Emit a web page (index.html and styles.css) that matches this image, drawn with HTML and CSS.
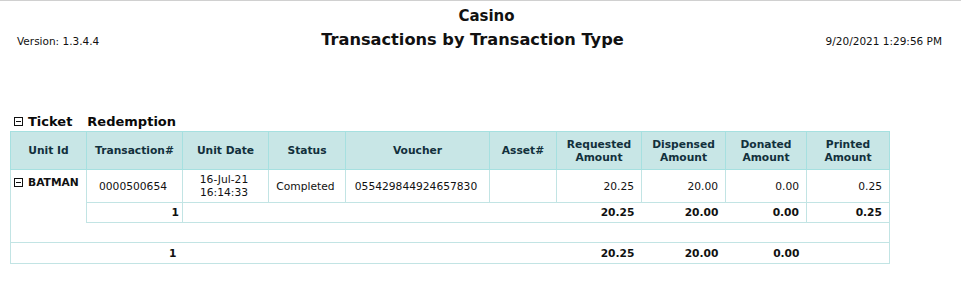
FILE: index.html
```html
<!DOCTYPE html>
<html>
<head>
<meta charset="utf-8">
<link rel="stylesheet" href="styles.css">
</head>
<body>
<div class="page">
  <header class="report-header">
    <div class="company">Casino</div>
    <div class="header-row">
      <div class="version">Version: 1.3.4.4</div>
      <div class="title">Transactions by Transaction Type</div>
      <div class="printed">9/20/2021 1:29:56 PM</div>
    </div>
  </header>

  <section class="group">
    <div class="group-title"><span class="toggle"></span><span class="group-name">Ticket</span><span class="group-name">Redemption</span></div>
    <table class="grid">
      <colgroup>
        <col class="c-unit"><col class="c-trans"><col class="c-date"><col class="c-status"><col class="c-voucher">
        <col class="c-asset"><col class="c-req"><col class="c-disp"><col class="c-don"><col class="c-prn">
      </colgroup>
      <thead>
        <tr>
          <th>Unit Id</th>
          <th>Transaction#</th>
          <th>Unit Date</th>
          <th>Status</th>
          <th>Voucher</th>
          <th>Asset#</th>
          <th>Requested<br>Amount</th>
          <th>Dispensed<br>Amount</th>
          <th>Donated<br>Amount</th>
          <th>Printed<br>Amount</th>
        </tr>
      </thead>
      <tbody>
        <tr class="data">
          <td class="unit" rowspan="2"><span class="toggle small"></span>BATMAN</td>
          <td class="ctr">0000500654</td>
          <td class="ctr">16-Jul-21<br>16:14:33</td>
          <td class="ctr">Completed</td>
          <td class="ctr">055429844924657830</td>
          <td></td>
          <td class="num">20.25</td>
          <td class="num">20.00</td>
          <td class="num">0.00</td>
          <td class="num">0.25</td>
        </tr>
        <tr class="subtotal">
          <td class="count">1</td>
          <td colspan="4" class="open"></td>
          <td class="num open">20.25</td>
          <td class="num open">20.00</td>
          <td class="num">0.00</td>
          <td class="num">0.25</td>
        </tr>
        <tr class="spacer">
          <td class="spacer-unit"></td>
          <td colspan="9" class="spacer-rest"></td>
        </tr>
        <tr class="total">
          <td colspan="2" class="count">1</td>
          <td colspan="4" class="open"></td>
          <td class="num open">20.25</td>
          <td class="num open">20.00</td>
          <td class="num open">0.00</td>
          <td class="open"></td>
        </tr>
      </tbody>
    </table>
  </section>
</div>
</body>
</html>
```

FILE: styles.css
```css
html, body {
  margin: 0;
  padding: 0;
  background: #ffffff;
}

body {
  font-family: "DejaVu Sans", Verdana, sans-serif;
  color: #111;
}

.page {
  border-top: 1px solid #d0d0d0;
  width: 961px;
  height: 291px;
}

.report-header {
  display: flex;
  flex-direction: column;
}

.company {
  text-align: center;
  font-weight: bold;
  font-size: 15px;
  padding-top: 6px;
  padding-left: 12px;
  height: 20px;
  line-height: 18px;
}

.header-row {
  display: grid;
  grid-template-columns: 1fr auto 1fr;
  align-items: center;
  height: 25px;
}

.version {
  font-size: 10.5px;
  padding-left: 17px;
  padding-top: 3px;
}

.title {
  font-weight: bold;
  font-size: 16.2px;
  text-align: center;
  margin-right: 16px;
}

.printed {
  font-size: 10.5px;
  text-align: right;
  padding-right: 19px;
  padding-top: 3px;
}

.group {
  padding: 0 0 0 10px;
  margin-top: 59px;
}

.group-title {
  display: flex;
  align-items: center;
  font-weight: bold;
  font-size: 13px;
  height: 20px;
  padding-left: 4px;
  padding-top: 1px;
  box-sizing: border-box;
  color: #0a0a0a;
}

.group-title .toggle {
  margin-right: 5px;
}

.group-name + .group-name {
  margin-left: 15px;
}

.toggle {
  display: inline-block;
  position: relative;
  width: 7px;
  height: 7px;
  border: 1px solid #111;
  flex: none;
}

.toggle::after {
  content: "";
  position: absolute;
  left: 1px;
  right: 1px;
  top: 3px;
  height: 1px;
  background: #111;
}

.toggle.small {
  margin-right: 5px;
  vertical-align: -1px;
}

.grid {
  border-collapse: collapse;
  table-layout: fixed;
  width: 879px;
  font-size: 10.7px;
}

.c-unit { width: 76px; }
.c-trans { width: 96px; }
.c-date { width: 86px; }
.c-status { width: 77px; }
.c-voucher { width: 144px; }
.c-asset { width: 67px; }
.c-req { width: 85px; }
.c-disp { width: 84px; }
.c-don { width: 81px; }
.c-prn { width: 83px; }

.grid th {
  background: #c8e6e6;
  border: 1px solid #a6e0e0;
  color: #12303c;
  font-weight: bold;
  height: 37px;
  padding: 0 2px;
  line-height: 13px;
  text-align: center;
}

.grid td {
  border: 1px solid #c2e4e4;
  padding: 0 7px 0 4px;
}

.data td {
  height: 32px;
  line-height: 13px;
}

.ctr { text-align: center; }
.num { text-align: right; }

.grid td.unit {
  vertical-align: top;
  font-weight: bold;
  padding: 6px 2px 0 3px;
  border-bottom: none;
  white-space: nowrap;
}

.subtotal td {
  height: 19px;
  font-weight: bold;
}

.grid td.count {
  text-align: right;
  padding-right: 3px;
}

.grid .subtotal td.open {
  border-right: none;
}

.grid .subtotal td.open + td {
  border-left: none;
}

.spacer td {
  height: 19px;
}

.grid td.spacer-unit {
  border-top: none;
  border-right: none;
}

.grid td.spacer-rest {
  border-left: none;
}

.total td {
  height: 20px;
  font-weight: bold;
  border-left: none;
  border-right: none;
}

.grid .total td.count {
  border-left: 1px solid #c2e4e4;
  padding-right: 6px;
}

.grid .total td:last-child {
  border-right: 1px solid #c2e4e4;
}
```
